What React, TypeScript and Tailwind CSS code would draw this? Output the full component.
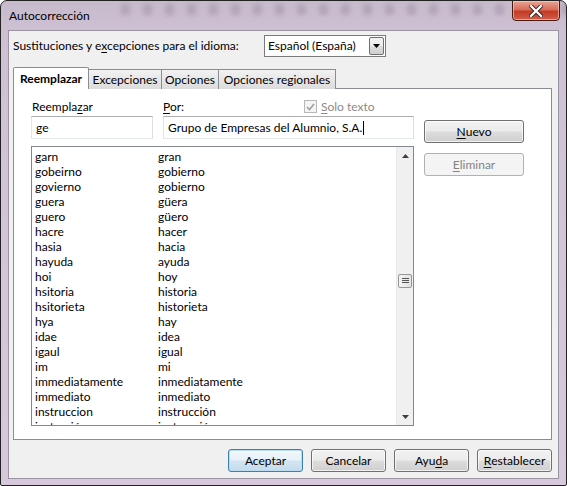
import React from 'react';

const rows: [string, string][] = [
  ['garn', 'gran'],
  ['gobeirno', 'gobierno'],
  ['govierno', 'gobierno'],
  ['guera', 'güera'],
  ['guero', 'güero'],
  ['hacre', 'hacer'],
  ['hasia', 'hacia'],
  ['hayuda', 'ayuda'],
  ['hoi', 'hoy'],
  ['hsitoria', 'historia'],
  ['hsitorieta', 'historieta'],
  ['hya', 'hay'],
  ['idae', 'idea'],
  ['igaul', 'igual'],
  ['im', 'mi'],
  ['immediatamente', 'inmediatamente'],
  ['immediato', 'inmediato'],
  ['instruccion', 'instrucción'],
  ['instrución', 'instrucción'],
];

const U: React.FC<{ children: React.ReactNode }> = ({ children }) => (
  <span className="underline underline-offset-2 decoration-1">{children}</span>
);

interface BtnProps {
  children: React.ReactNode;
  focused?: boolean;
}

const Button: React.FC<BtnProps> = ({ children, focused }) => {
  const cls = focused
    ? 'border-[#3c7fb1] bg-[linear-gradient(#f4f9fc_0%,#e6f1f8_49%,#d3e5f2_51%,#c5dcec_100%)] shadow-[inset_0_0_0_1px_#b8dcf4]'
    : 'border-[#707070] bg-[linear-gradient(#f2f2f2_0%,#ebebeb_49%,#dddddd_51%,#cfcfcf_100%)] shadow-[inset_0_0_0_1px_rgba(255,255,255,0.7)]';
  return (
    <div className={`w-[75px] h-[23px] rounded-[3px] border flex items-center justify-center text-black ${cls}`}>
      {children}
    </div>
  );
};

const ScrollArrow: React.FC<{ up?: boolean }> = ({ up }) => (
  <div className="h-[17px] flex items-center justify-center">
    <svg width="7" height="4" viewBox="0 0 7 4">
      {up ? <polygon points="0,4 7,4 3.5,0" fill="#404040" /> : <polygon points="0,0 7,0 3.5,4" fill="#404040" />}
    </svg>
  </div>
);

export default function App() {
  return (
    <div
      className="w-[567px] h-[486px] overflow-hidden bg-white"
      style={{ fontFamily: 'Lato, "Noto Sans", sans-serif' }}
    >
      <div className="w-[567px] h-[486px] rounded-t-[7px] rounded-b-[2px] border border-[#222] bg-[linear-gradient(#c6bacb_0%,#cfc1d4_7%,#d8c8dc_100%)] flex flex-col text-[12px] leading-none text-black relative overflow-hidden">
        {/* blurred glass blobs in title bar */}
        <div className="absolute left-[120px] top-[3px] flex gap-[13px] opacity-35 blur-[2px]">
          {Array.from({ length: 22 }).map((_, i) => (
            <div key={i} className="w-[9px] h-[11px] bg-[#8f7d97] rounded-[2px]" />
          ))}
        </div>
        {/* title bar */}
        <div className="h-[29px] flex items-start justify-between shrink-0 relative">
          <div className="pl-[8px] pt-[9px] text-[12px] text-black">Autocorrección</div>
          <div className="mr-[6px] mt-[-1px] w-[48px] h-[21px] rounded-b-[4px] border border-[#4a1a14] bg-[linear-gradient(#e8a595_0%,#d86e5a_45%,#c43a22_55%,#d0604a_100%)] flex items-center justify-center shadow-[inset_0_0_0_1px_rgba(255,210,200,0.6)]">
            <svg width="14" height="12" viewBox="0 0 14 12">
              <path d="M2 1 L12 11 M12 1 L2 11" stroke="#3a2a2a" strokeWidth="4.2" strokeLinecap="square" />
              <path d="M2 1 L12 11 M12 1 L2 11" stroke="#ffffff" strokeWidth="2.2" strokeLinecap="square" />
            </svg>
          </div>
        </div>

        {/* client area */}
        <div className="ml-[7px] mr-[7px] h-[449px] border border-[#9a93a0] bg-[#f0f0f0] flex flex-col">
          {/* language row */}
          <div className="flex items-center h-[22px] mt-[4px] pl-[4px]">
            <div className="w-[251px]">
              Sustituciones y e<U>x</U>cepciones para el idioma:
            </div>
            <div className="w-[122px] h-[22px] border border-[#7a7a7a] bg-white flex items-center justify-between pl-[3px] pr-[1px]">
              <span>Español (España)</span>
              <div className="w-[15px] h-[18px] border border-[#707070] rounded-[2px] bg-[linear-gradient(#f2f2f2_0%,#ebebeb_49%,#dddddd_51%,#cfcfcf_100%)] flex items-center justify-center">
                <svg width="7" height="4" viewBox="0 0 7 4">
                  <polygon points="0,0 7,0 3.5,4" fill="#000" />
                </svg>
              </div>
            </div>
          </div>

          {/* tabs */}
          <div className="ml-[4px] mt-[10px] flex items-end h-[22px] relative z-10">
            <div className="h-[22px] w-[76px] bg-white border border-[#898c95] border-b-0 rounded-t-[2px] flex items-center justify-center font-bold">
              Reemplazar
            </div>
            <div className="h-[20px] w-[73px] bg-[linear-gradient(#f2f2f2,#dcdcdc)] border border-[#898c95] border-l-0 border-b-0 flex items-center justify-center">
              Excepciones
            </div>
            <div className="h-[20px] w-[57px] bg-[linear-gradient(#f2f2f2,#dcdcdc)] border border-[#898c95] border-l-0 border-b-0 flex items-center justify-center">
              Opciones
            </div>
            <div className="h-[20px] w-[117px] bg-[linear-gradient(#f2f2f2,#dcdcdc)] border border-[#898c95] border-l-0 border-b-0 flex items-center justify-center">
              Opciones regionales
            </div>
          </div>

          {/* tab panel */}
          <div className="ml-[4px] mr-[6px] h-[352px] border border-[#898c95] bg-white mt-[-1px] flex pl-[17px] pt-[9px]">
            <div className="w-[383px] flex flex-col">
              <div className="flex h-[17px] items-center">
                <div className="w-[132px] pl-[1px]">
                  Reempla<U>z</U>ar
                </div>
                <div className="w-[141px]">
                  <U>P</U>or:
                </div>
                <div className="flex items-center gap-[4px] text-[#8a8a8a]">
                  <div className="w-[13px] h-[13px] border border-[#b8b8b8] bg-[#f4f4f4] flex items-center justify-center">
                    <svg width="9" height="8" viewBox="0 0 9 8">
                      <path d="M1 4 L3.5 6.5 L8 1" stroke="#a0a0a0" strokeWidth="1.6" fill="none" />
                    </svg>
                  </div>
                  <span>
                    <U>S</U>olo texto
                  </span>
                </div>
              </div>
              <div className="flex mt-[1px] h-[23px]">
                <div className="w-[122px] h-[23px] border border-[#abadb3] border-l-[#e2e3ea] border-r-[#dbdfe6] border-b-[#e3e9ef] flex items-center pl-[4px]">
                  ge
                </div>
                <div className="ml-[10px] w-[251px] h-[23px] border border-[#abadb3] border-l-[#e2e3ea] border-r-[#dbdfe6] border-b-[#e3e9ef] flex items-center pl-[4px]">
                  Grupo de Empresas del Alumnio, S.A.
                  <span className="inline-block w-[1px] h-[14px] bg-black ml-[1px]" />
                </div>
              </div>
              <div className="mt-[7px] h-[280px] border border-[#828790] flex overflow-hidden">
                <div className="flex-1 pt-[2px] pl-[3px] overflow-hidden">
                  {rows.map(([a, b], i) => (
                    <div key={i} className="h-[15px] flex items-center">
                      <span className="w-[123px]">{a}</span>
                      <span>{b}</span>
                    </div>
                  ))}
                </div>
                <div className="w-[17px] bg-[#f0f0f0] border-l border-[#e8e8e8] flex flex-col">
                  <ScrollArrow up />
                  <div className="h-[110px]" />
                  <div className="mx-[1px] h-[14px] border border-[#989898] rounded-[2px] bg-[linear-gradient(90deg,#f4f4f4,#e2e2e2)] flex items-center justify-center">
                    <svg width="7" height="6" viewBox="0 0 7 6">
                      <path d="M0 0.5 H7 M0 2.5 H7 M0 4.5 H7" stroke="#555" strokeWidth="1" />
                    </svg>
                  </div>
                  <div className="flex-1" />
                  <ScrollArrow />
                </div>
              </div>
            </div>
            <div className="ml-[10px] flex flex-col pt-[22px] gap-[10px]">
              <div className="w-[100px] h-[23px] rounded-[3px] border border-[#707070] bg-[linear-gradient(#f2f2f2_0%,#ebebeb_49%,#dddddd_51%,#cfcfcf_100%)] flex items-center justify-center shadow-[inset_0_0_0_1px_rgba(255,255,255,0.7)]">
                <U>N</U>uevo
              </div>
              <div className="w-[100px] h-[23px] rounded-[3px] border border-[#adb2b5] bg-[#f4f4f4] text-[#838383] flex items-center justify-center">
                <U>E</U>liminar
              </div>
            </div>
          </div>

          {/* bottom buttons */}
          <div className="flex justify-end gap-[8px] mr-[6px] mt-[9px]">
            <Button focused>Aceptar</Button>
            <Button>Cancelar</Button>
            <Button>
              Ayu<U>d</U>a
            </Button>
            <Button>
              <U>R</U>establecer
            </Button>
          </div>
        </div>
      </div>
    </div>
  );
}
